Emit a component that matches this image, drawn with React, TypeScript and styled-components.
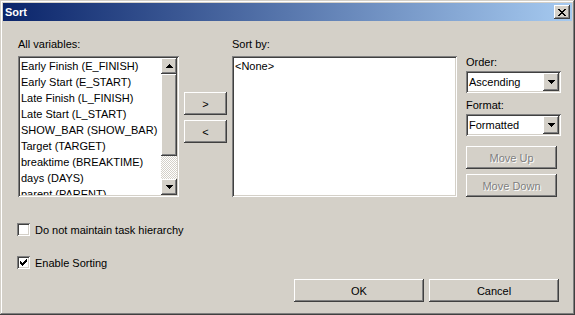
import React from "react";
import styled, { createGlobalStyle, css } from "styled-components";

const GlobalStyle = createGlobalStyle`
  html, body {
    margin: 0;
    padding: 0;
    background: #d4d0c8;
  }
  body {
    font-family: "Liberation Sans", Arial, sans-serif;
    font-size: 11px;
    color: #000;
  }
`;

const raised = css`
  background: #d4d0c8;
  box-shadow: inset -1px -1px #404040, inset 1px 1px #fff,
    inset -2px -2px #808080, inset 2px 2px #d4d0c8;
`;

const sunken = css`
  background: #fff;
  box-shadow: inset 1px 1px #808080, inset -1px -1px #fff,
    inset 2px 2px #404040, inset -2px -2px #d4d0c8;
`;

const Window = styled.div`
  width: 575px;
  height: 315px;
  box-sizing: border-box;
  padding: 3px;
  background: #d4d0c8;
  box-shadow: inset -1px -1px #404040, inset 1px 1px #d4d0c8,
    inset -2px -2px #808080, inset 2px 2px #fff;
  display: flex;
  flex-direction: column;
`;

const TitleBar = styled.div`
  height: 18px;
  flex-shrink: 0;
  display: flex;
  align-items: center;
  justify-content: space-between;
  padding: 0 2px;
  background: linear-gradient(to right, #0a246a, #a6caf0);
`;

const Title = styled.span`
  color: #fff;
  font-weight: bold;
  line-height: 18px;
`;

const CloseButton = styled.div`
  ${raised};
  width: 16px;
  height: 14px;
  display: flex;
  align-items: center;
  justify-content: center;
`;

const Content = styled.div`
  flex: 1;
  display: flex;
  flex-direction: column;
  padding: 17px 13px 0 15px;
`;

const MainRow = styled.div`
  display: flex;
  align-items: flex-start;
`;

const Column = styled.div<{ $left?: number; $top?: number; $gap?: number }>`
  display: flex;
  flex-direction: column;
  flex-shrink: 0;
  margin-left: ${(p) => p.$left ?? 0}px;
  padding-top: ${(p) => p.$top ?? 0}px;
  gap: ${(p) => p.$gap ?? 0}px;
`;

const FieldLabel = styled.div<{ $below?: number }>`
  height: 13px;
  line-height: 13px;
  margin-bottom: ${(p) => p.$below ?? 5}px;
  white-space: nowrap;
`;

const ListBox = styled.div`
  ${sunken};
  width: 161px;
  height: 141px;
  box-sizing: border-box;
  padding: 2px;
  display: flex;
  overflow: hidden;
`;

const Items = styled.div`
  flex: 1;
  overflow: hidden;
`;

const Item = styled.div`
  height: 16px;
  line-height: 16px;
  padding-left: 1px;
  white-space: nowrap;
`;

const ScrollBar = styled.div`
  width: 16px;
  display: flex;
  flex-direction: column;
`;

const ScrollButton = styled.div`
  ${raised};
  height: 16px;
  flex-shrink: 0;
  display: flex;
  align-items: center;
  justify-content: center;
`;

const ScrollThumb = styled.div`
  ${raised};
  height: 82px;
  flex-shrink: 0;
`;

const ScrollTrack = styled.div`
  flex: 1;
  background-color: #fff;
  background-image: conic-gradient(#d4d0c8 25%, #fff 0 50%, #d4d0c8 0 75%, #fff 0);
  background-size: 2px 2px;
`;

const PushButton = styled.button<{ $w: number; $h?: number }>`
  ${raised};
  width: ${(p) => p.$w}px;
  height: ${(p) => p.$h ?? 23}px;
  border: none;
  padding: 0;
  margin: 0;
  font: inherit;
  color: #000;
  flex-shrink: 0;

  &:disabled {
    color: #808080;
    text-shadow: 1px 1px 0 #fff;
  }
`;

const SortBox = styled.div`
  ${sunken};
  width: 225px;
  height: 141px;
  box-sizing: border-box;
  padding: 2px 3px;
  line-height: 16px;
`;

const Select = styled.div`
  ${sunken};
  width: 95px;
  height: 22px;
  box-sizing: border-box;
  padding: 2px;
  display: flex;
`;

const SelectText = styled.div`
  flex: 1;
  line-height: 18px;
  padding-left: 1px;
`;

const DropButton = styled.div`
  ${raised};
  width: 16px;
  height: 18px;
  display: flex;
  align-items: center;
  justify-content: center;
`;

const CheckGroup = styled.div`
  display: flex;
  flex-direction: column;
  gap: 20px;
  margin-top: 26px;
  margin-left: -1px;
`;

const CheckRow = styled.label`
  display: flex;
  align-items: center;
  gap: 5px;
  height: 13px;
`;

const CheckBox = styled.span`
  ${sunken};
  width: 13px;
  height: 13px;
  display: flex;
  align-items: center;
  justify-content: center;
`;

const Footer = styled.div`
  display: flex;
  justify-content: flex-end;
  gap: 5px;
  margin-top: 10px;
`;

const Glyph = ({ rows }: { rows: string[] }) => (
  <svg width={rows[0].length} height={rows.length} shapeRendering="crispEdges">
    {rows.flatMap((r, y) =>
      [...r].map((c, x) =>
        c === "#" ? <rect key={`${x}-${y}`} x={x} y={y} width={1} height={1} fill="#000" /> : null
      )
    )}
  </svg>
);

const closeGlyph = ["##....##", ".##..##.", "..####..", "...##...", "..####..", ".##..##.", "##....##"];
const upGlyph = ["...#...", "..###..", ".#####.", "#######"];
const downGlyph = ["#######", ".#####.", "..###..", "...#..."];
const checkGlyph = ["......#", ".....##", "#...###", "##.###.", "#####..", ".###...", "..#...."];

const variables = [
  "Early Finish (E_FINISH)",
  "Early Start (E_START)",
  "Late Finish (L_FINISH)",
  "Late Start (L_START)",
  "SHOW_BAR (SHOW_BAR)",
  "Target (TARGET)",
  "breaktime (BREAKTIME)",
  "days (DAYS)",
  "parent (PARENT)",
];

const App = () => {
  return (
    <>
      <GlobalStyle />
      <Window>
        <TitleBar>
          <Title>Sort</Title>
          <CloseButton>
            <Glyph rows={closeGlyph} />
          </CloseButton>
        </TitleBar>

        <Content>
          <MainRow>
            <Column>
              <FieldLabel>All variables:</FieldLabel>
              <ListBox>
                <Items>
                  {variables.map((v) => (
                    <Item key={v}>{v}</Item>
                  ))}
                </Items>
                <ScrollBar>
                  <ScrollButton>
                    <Glyph rows={upGlyph} />
                  </ScrollButton>
                  <ScrollThumb />
                  <ScrollTrack />
                  <ScrollButton>
                    <Glyph rows={downGlyph} />
                  </ScrollButton>
                </ScrollBar>
              </ListBox>
            </Column>

            <Column $left={5} $top={54} $gap={5}>
              <PushButton $w={43}>&gt;</PushButton>
              <PushButton $w={43}>&lt;</PushButton>
            </Column>

            <Column $left={5}>
              <FieldLabel>Sort by:</FieldLabel>
              <SortBox>&lt;None&gt;</SortBox>
            </Column>

            <Column $left={9} $top={18}>
              <FieldLabel $below={2}>Order:</FieldLabel>
              <Select>
                <SelectText>Ascending</SelectText>
                <DropButton>
                  <Glyph rows={downGlyph} />
                </DropButton>
              </Select>
              <FieldLabel $below={2} style={{ marginTop: 6 }}>Format:</FieldLabel>
              <Select>
                <SelectText>Formatted</SelectText>
                <DropButton>
                  <Glyph rows={downGlyph} />
                </DropButton>
              </Select>
              <Column $top={10} $gap={5}>
                <PushButton $w={91} disabled>Move Up</PushButton>
                <PushButton $w={91} disabled>Move Down</PushButton>
              </Column>
            </Column>
          </MainRow>

          <CheckGroup>
            <CheckRow>
              <CheckBox />
              Do not maintain task hierarchy
            </CheckRow>
            <CheckRow>
              <CheckBox>
                <Glyph rows={checkGlyph} />
              </CheckBox>
              Enable Sorting
            </CheckRow>
          </CheckGroup>

          <Footer>
            <PushButton $w={130}>OK</PushButton>
            <PushButton $w={130}>Cancel</PushButton>
          </Footer>
        </Content>
      </Window>
    </>
  );
};

export default App;
